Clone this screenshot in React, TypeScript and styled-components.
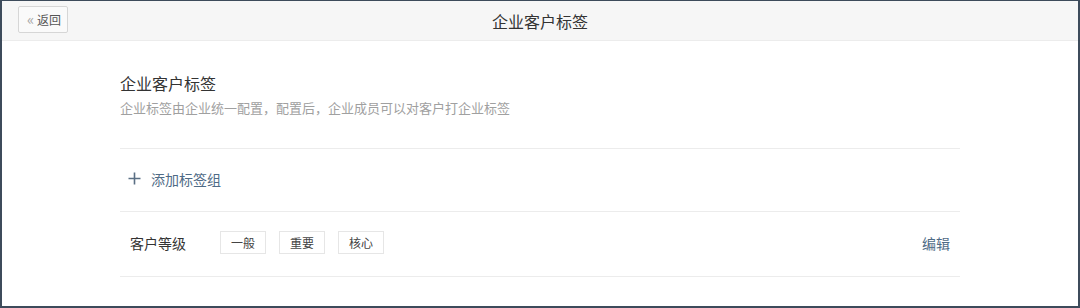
import styled, { createGlobalStyle } from "styled-components";

const GlobalStyle = createGlobalStyle`
  html, body {
    margin: 0;
    padding: 0;
    background: #ffffff;
  }
  body {
    font-family: "Noto Sans CJK SC", "Noto Sans", sans-serif;
  }
`;

const Frame = styled.div`
  box-sizing: border-box;
  width: 1080px;
  height: 308px;
  border-style: solid;
  border-color: #3d4b5b;
  border-width: 1px 2px 2px 2px;
  background: #ffffff;
  overflow: hidden;
`;

const Header = styled.div`
  position: relative;
  height: 39px;
  background: #f6f6f6;
  border-bottom: 1px solid #ececec;
  display: flex;
  align-items: center;
  justify-content: center;
`;

const BackButton = styled.button`
  position: absolute;
  left: 16px;
  top: 5px;
  height: 27px;
  width: 50px;
  box-sizing: border-box;
  border: 1px solid #d6d6d6;
  background: #fafafa;
  border-radius: 2px;
  padding: 0 0 0 2px;
  display: flex;
  align-items: center;
  justify-content: center;
  gap: 3px;
  font-family: inherit;
  font-size: 12px;
  color: #555;
  cursor: pointer;
`;

const Chevron = styled.span`
  color: #a8a8a8;
  font-size: 15px;
  line-height: 1;
  margin-top: -2px;
`;

const Title = styled.div`
  font-size: 16px;
  color: #333;
`;

const Content = styled.div`
  width: 840px;
  margin: 0 auto;
`;

const Intro = styled.div`
  padding: 32px 0 31px;
  border-bottom: 1px solid #ececec;
`;

const Heading = styled.div`
  font-size: 16px;
  line-height: 20px;
  color: #333;
`;

const Subtitle = styled.div`
  margin-top: 5px;
  font-size: 13px;
  line-height: 19px;
  color: #a0a0a0;
`;

const AddRow = styled.div`
  box-sizing: border-box;
  height: 63px;
  padding: 0 0 3px 8px;
  border-bottom: 1px solid #ececec;
  display: flex;
  align-items: center;
  gap: 10px;
  color: #4f6b86;
  font-size: 14px;
  cursor: pointer;
`;

const TagRow = styled.div`
  box-sizing: border-box;
  height: 65px;
  padding: 0 0 3px 10px;
  border-bottom: 1px solid #ececec;
  display: flex;
  align-items: center;
`;

const GroupName = styled.div`
  width: 90px;
  font-size: 14px;
  color: #333;
`;

const Tags = styled.div`
  display: flex;
  gap: 13px;
  flex: 1;
`;

const Tag = styled.span`
  box-sizing: border-box;
  width: 46px;
  height: 23px;
  border: 1px solid #e6e6e6;
  display: flex;
  align-items: center;
  justify-content: center;
  font-size: 12px;
  color: #444;
`;

const EditLink = styled.span`
  margin-right: 10px;
  font-size: 14px;
  color: #4f6b86;
  cursor: pointer;
`;

const PlusIcon = () => (
  <svg width="13" height="13" viewBox="0 0 13 13">
    <path d="M6.5 0.5v12M0.5 6.5h12" stroke="#5a6f84" strokeWidth="1.6" fill="none" />
  </svg>
);

export default function App() {
  return (
    <>
      <GlobalStyle />
      <Frame>
        <Header>
          <BackButton>
            <Chevron>«</Chevron>返回
          </BackButton>
          <Title>企业客户标签</Title>
        </Header>
        <Content>
          <Intro>
            <Heading>企业客户标签</Heading>
            <Subtitle>企业标签由企业统一配置，配置后，企业成员可以对客户打企业标签</Subtitle>
          </Intro>
          <AddRow>
            <PlusIcon />
            添加标签组
          </AddRow>
          <TagRow>
            <GroupName>客户等级</GroupName>
            <Tags>
              {["一般", "重要", "核心"].map((t) => (
                <Tag key={t}>{t}</Tag>
              ))}
            </Tags>
            <EditLink>编辑</EditLink>
          </TagRow>
        </Content>
      </Frame>
    </>
  );
}
